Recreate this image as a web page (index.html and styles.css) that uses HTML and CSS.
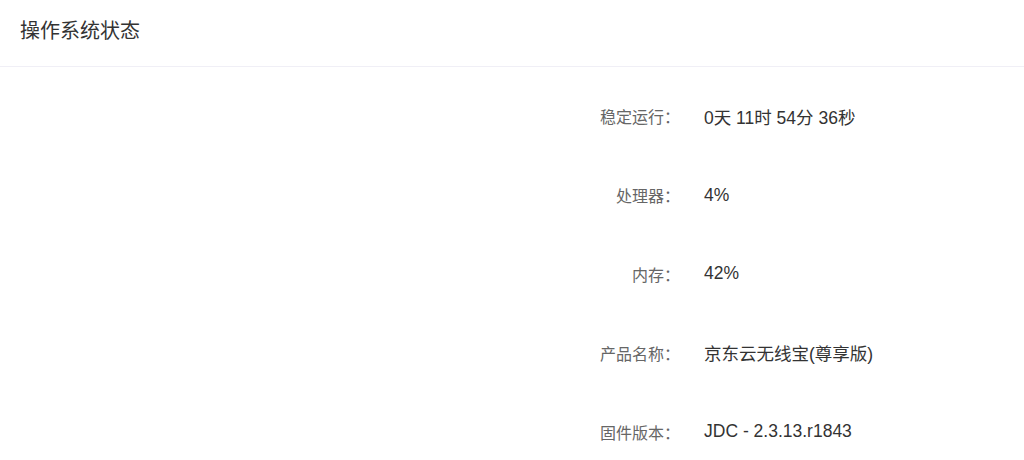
FILE: index.html
```html
<!DOCTYPE html>
<html lang="zh-CN">
<head>
<meta charset="UTF-8">
<title>操作系统状态</title>
<link rel="stylesheet" href="styles.css">
</head>
<body>

<div class="panel">
    <div class="panel-head">操作系统状态</div>
    <div class="status">
        <div class="row">
            <div class="label">稳定运行：</div>
            <div class="value">0天 11时 54分 36秒</div>
        </div>
        <div class="row">
            <div class="label">处理器：</div>
            <div class="value">4%</div>
        </div>
        <div class="row">
            <div class="label">内存：</div>
            <div class="value">42%</div>
        </div>
        <div class="row">
            <div class="label">产品名称：</div>
            <div class="value">京东云无线宝(尊享版)</div>
        </div>
        <div class="row">
            <div class="label">固件版本：</div>
            <div class="value">JDC - 2.3.13.r1843</div>
        </div>
    </div>
</div>

</body>
</html>
```

FILE: styles.css
```css
body {
    margin: 0;
    background: #fff;
    font-family: "Liberation Sans", Arial, "Noto Sans CJK SC", sans-serif;
    color: #333;
}
.panel-head {
    height: 66px;
    line-height: 62px;
    padding: 0 20px;
    font-size: 20px;
    color: #333;
    border-bottom: 1px solid #f0eff6;
}
.status {
    padding-top: 10px;
}
.row {
    display: grid;
    grid-template-columns: 680px 1fr;
    column-gap: 24px;
    height: 78.8px;
    align-items: center;
}
.label {
    text-align: right;
    font-size: 16px;
    color: #666;
}
.value {
    font-size: 17.5px;
    color: #333;
}
```
